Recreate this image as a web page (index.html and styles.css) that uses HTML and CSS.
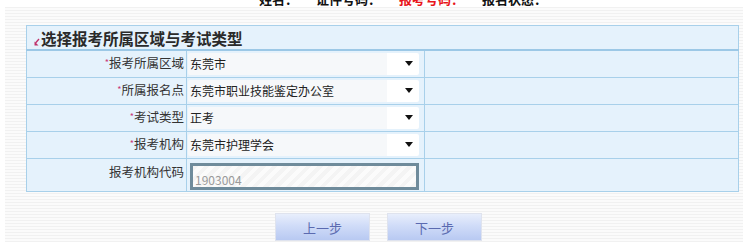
FILE: index.html
```html
<!DOCTYPE html>
<html lang="zh-CN">
<head>
    <meta charset="UTF-8">
    <title>选择报考所属区域与考试类型</title>
    <link rel="stylesheet" href="styles.css">
</head>
<body>
    <div class="info">
        <span class="info-item">姓名：</span>
        <span class="info-item">证件号码：</span>
        <span class="info-item red">报考号码：</span>
        <span class="info-item">报名状态：</span>
    </div>

    <div class="panel">
        <table class="form-table">
            <tr>
                <th colspan="3" class="title">
                    <svg class="title-icon" width="6" height="8" viewBox="0 0 6 8">
                        <path d="M5 1 L1.5 5" stroke="#c0306a" stroke-width="1.4" fill="none"/>
                        <path d="M0.5 3.5 L0.5 7.5 L4.5 7.5 Z" fill="#c0306a"/>
                    </svg>选择报考所属区域与考试类型
                </th>
            </tr>
            <tr>
                <td class="label"><span class="star">*</span>报考所属区域</td>
                <td class="value"><div class="select"><span>东莞市</span><i class="arrow"></i></div></td>
                <td class="empty"></td>
            </tr>
            <tr>
                <td class="label"><span class="star">*</span>所属报名点</td>
                <td class="value"><div class="select"><span>东莞市职业技能鉴定办公室</span><i class="arrow"></i></div></td>
                <td class="empty"></td>
            </tr>
            <tr>
                <td class="label"><span class="star">*</span>考试类型</td>
                <td class="value"><div class="select"><span>正考</span><i class="arrow"></i></div></td>
                <td class="empty"></td>
            </tr>
            <tr>
                <td class="label"><span class="star">*</span>报考机构</td>
                <td class="value"><div class="select"><span>东莞市护理学会</span><i class="arrow"></i></div></td>
                <td class="empty"></td>
            </tr>
            <tr class="code-row">
                <td class="label">报考机构代码</td>
                <td class="value"><div class="code-input">1903004</div></td>
                <td class="empty"></td>
            </tr>
        </table>

        <div class="buttons">
            <button class="step-button">上一步</button>
            <button class="step-button">下一步</button>
        </div>
    </div>
</body>
</html>
```
FILE: styles.css
```css
body {
    margin: 0;
    padding: 0;
    background: #ffffff;
    font-family: "Noto Sans CJK SC", "Noto Sans", sans-serif;
    font-size: 12px;
    color: #333;
}

.info {
    height: 7px;
    overflow: hidden;
    display: flex;
    align-items: flex-end;
    padding-left: 259px;
    font-size: 13px;
    font-weight: bold;
    line-height: 16px;
    color: #111;
}

.info-item {
    margin-right: 18px;
}

.info-item.red {
    color: #e8151a;
}

.panel {
    margin-left: 5px;
    padding: 18px 4px 2px 21px;
    background: repeating-linear-gradient(to bottom, #f1f1f1 0, #f1f1f1 1px, #fbfbfb 1px, #fbfbfb 3px);
}

.form-table {
    width: 713px;
    border-collapse: collapse;
    background: #e5f2fc;
    border: 1px solid #a8d0ea;
}

.form-table td, .form-table th {
    border: 1px solid #a8d0ea;
    padding: 0;
}

.title {
    height: 23px;
    text-align: left;
    font-size: 15.5px;
    font-weight: 600;
    color: #2a2a2a;
    padding-left: 7px !important;
    border-bottom: 2px solid #9cc8e6 !important;
    line-height: 22px;
}

.title-icon {
    margin-right: 1px;
    vertical-align: -1px;
}

.label {
    width: 157px;
    height: 26px;
    text-align: right;
    font-size: 12.5px;
    color: #333;
    padding-right: 2px !important;
    vertical-align: top;
    line-height: 24px;
}

.star {
    color: #c8387a;
    font-size: 9px;
    vertical-align: 2px;
}

.value {
    width: 236px;
    padding-left: 1px !important;
}

.select {
    display: flex;
    align-items: center;
    justify-content: space-between;
    width: 231px;
    height: 22px;
    margin: 1px 0 2px 0;
    background: linear-gradient(to right, #f6f8fa 0, #f6f8fa 86%, #ffffff 86%);
    border-radius: 2px;
    color: #222;
    line-height: 20px;
    padding-left: 2px;
    box-sizing: border-box;
}

.arrow {
    width: 0;
    height: 0;
    margin-right: 6px;
    border-left: 4px solid transparent;
    border-right: 4px solid transparent;
    border-top: 5px solid #111;
}

.code-row .label {
    height: 32px;
    line-height: 26px;
}

.code-input {
    width: 229px;
    height: 27px;
    margin: 3px 0 1px 2px;
    box-sizing: border-box;
    border: 3px solid #6f8b9b;
    background: repeating-linear-gradient(135deg, #f4f4f4 0, #f4f4f4 4px, #fbfbfb 4px, #fbfbfb 8px);
    color: #9a9a9a;
    padding: 6px 0 0 2px;
    line-height: 16px;
}

.empty {
    background: #e5f2fc;
}

.buttons {
    display: flex;
    justify-content: center;
    gap: 17px;
    margin-top: 21px;
    padding-right: 8px;
}

.step-button {
    width: 95px;
    height: 28px;
    border: 1px solid #dfe3ee;
    background: linear-gradient(to bottom, #e8eefc 0, #d0dcf8 45%, #b8c9f2 100%);
    color: #5b6ab0;
    font-family: "Noto Sans CJK SC", sans-serif;
    font-size: 13px;
    padding: 0;
}
```
